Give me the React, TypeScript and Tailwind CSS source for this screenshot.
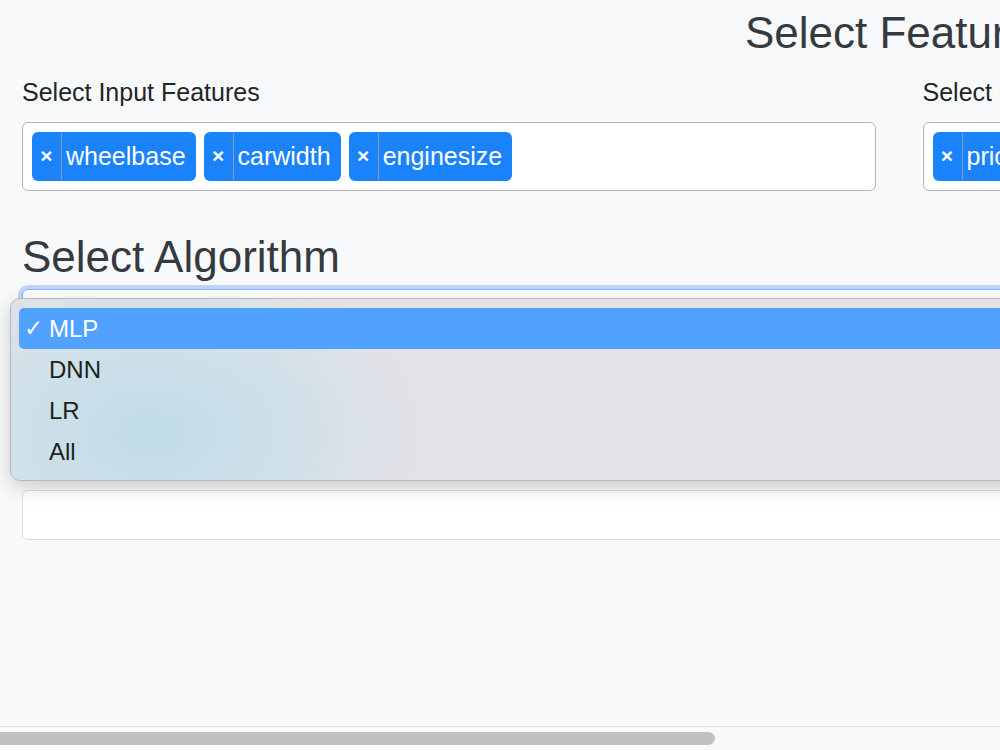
import React from 'react';

const inputFeatures = ['wheelbase', 'carwidth', 'enginesize'];
const algorithms = ['MLP', 'DNN', 'LR', 'All'];

function Tag({ label }: { label: string }) {
  return (
    <span className="flex h-[49px] shrink-0 items-stretch rounded-[6px] bg-[#1a82fb] text-white">
      <span className="flex w-[29px] items-center justify-center pb-[2px] text-[21px] font-bold leading-none">×</span>
      <span className="my-[1px] flex items-center border-l-[1.5px] border-[#8c9cb0] pl-[4px] pr-[10px] text-[25px] leading-none">
        {label}
      </span>
    </span>
  );
}

function FeatureBox({ tags }: { tags: string[] }) {
  return (
    <div className="flex h-[69px] items-center gap-[8px] rounded-[6px] border-[1.5px] border-[#b4b4b4] bg-white px-[9px]">
      {tags.map((t) => (
        <Tag key={t} label={t} />
      ))}
    </div>
  );
}

export default function App() {
  return (
    <div className="relative flex h-[750px] w-[1000px] flex-col overflow-hidden bg-[#f8f9fa] font-['Liberation_Sans',Arial,sans-serif] text-[#212529]">
      <div className="flex-1 overflow-hidden">
        <div className="w-[1798px] px-[22px]">
          <h3 className="mt-[7px] text-center text-[44px] leading-[1.2] text-[#343a40]">Select Features</h3>

          <div className="mt-[14px] grid grid-cols-2 gap-[47px]">
            <div>
              <div className="mb-[11px] text-[25px] leading-[1.5]">Select Input Features</div>
              <FeatureBox tags={inputFeatures} />
            </div>
            <div>
              <div className="mb-[11px] text-[25px] leading-[1.5]">Select Output Features</div>
              <FeatureBox tags={['price']} />
            </div>
          </div>

          <h3 className="mt-[40px] text-[44px] leading-[1.2] text-[#343a40]">Select Algorithm</h3>

          <div className="mt-[5px] h-[58px] w-[1754px] rounded-[6px] border-[1.5px] border-[#86b7fe] bg-white shadow-[0_0_0_4px_rgba(13,110,253,0.25)]" />

          <div className="mt-[143px] h-[50px] w-[1754px] rounded-[6px] border border-[#dcdcdf] bg-white" />
        </div>
      </div>

      {/* native popup menu of the focused select */}
      <div className="absolute left-[10px] top-[298px] h-[183px] w-[1200px] rounded-[10px] border border-[#b8b6bc] bg-[radial-gradient(ellipse_270px_180px_at_140px_135px,#c1dbe9_0%,#cde0e9_45%,#e4e1e8_100%)] px-[8px] pt-[9px] shadow-[0_6px_20px_rgba(0,0,0,0.18)]">
        {algorithms.map((a, i) => (
          <div
            key={a}
            className={
              i === 0
                ? 'flex h-[41px] items-center rounded-[5px] bg-[#51a2ff] text-[24px] text-white'
                : 'flex h-[41px] items-center text-[24px] text-[#1e1e1e]'
            }
          >
            <span className="w-[30px] pl-[5px] text-[23px] leading-none">{i === 0 ? '✓' : ''}</span>
            <span>{a}</span>
          </div>
        ))}
      </div>

      {/* horizontal scrollbar */}
      <div className="h-[24px] shrink-0 border-t border-[#e3e3e3] bg-[#fafafa] pt-[5px]">
        <div className="h-[13px] w-[715px] rounded-r-full bg-[#c1c1c1]" />
      </div>
    </div>
  );
}
